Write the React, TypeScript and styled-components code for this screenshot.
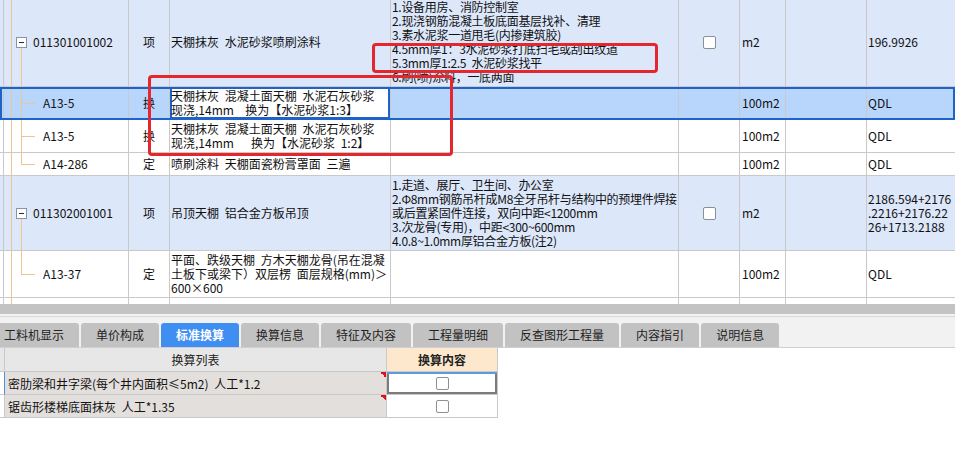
import styled, { createGlobalStyle, css } from 'styled-components';

const LINE = '#c9c9c9';
const TREE = '#efc58e';
const COLS = '4px 125px 41px 221px 288px 61px 46px 81px 1fr';

const GlobalStyle = createGlobalStyle`
  * { box-sizing: border-box; }
  html, body { margin: 0; padding: 0; background: #fff; }
  body {
    font-family: "Noto Sans CJK SC", "Liberation Sans", sans-serif;
    font-size: 12px;
    color: #111;
    overflow: hidden;
  }
`;

const Page = styled.div`
  width: 955px;
  height: 467px;
  overflow: hidden;
  background: #fff;
`;

const TopGrid = styled.div`
  position: relative;
  height: 304px;
  overflow: hidden;
`;

const Body = styled.div`
  margin-top: -2px;
  word-spacing: 3px;
`;

const Row = styled.div<{ $bg?: string; $selected?: boolean; $minH?: number }>`
  display: grid;
  grid-template-columns: ${COLS};
  min-height: ${p => p.$minH ?? 22}px;
  background: ${p => p.$bg ?? '#fff'};
  border-bottom: 1px solid ${LINE};
  line-height: 14px;
  ${p => p.$selected && css`
    outline: 2px solid #1d63c9;
    outline-offset: -2px;
    position: relative;
    z-index: 1;
  `}
`;

const Filler = styled(Row)`
  min-height: 0;
  height: 6px;
  border-bottom: none;
`;

const Cell = styled.div`
  display: flex;
  align-items: center;
  padding: 2px;
  border-right: 1px solid ${LINE};
  white-space: pre;
  overflow: hidden;
`;

const Lead = styled(Cell)`
  padding: 0;
`;

type Tree = 'parent' | 'child' | 'last' | 'none';

const bar = `linear-gradient(${TREE}, ${TREE})`;
const treeBg = (t: Tree) => {
  const layers = [`${bar} 7px 0 / 1px 100% no-repeat`];
  if (t === 'parent') layers.push(`${bar} 17px 100% / 1px 50% no-repeat`);
  if (t === 'child') layers.push(`${bar} 17px 0 / 1px 100% no-repeat`, `${bar} 17px 50% / 14px 1px no-repeat`);
  if (t === 'last') layers.push(`${bar} 17px 0 / 1px 50% no-repeat`, `${bar} 17px 50% / 14px 1px no-repeat`);
  return layers.join(', ');
};

const CodeCell = styled(Cell)<{ $tree: Tree }>`
  background: ${p => treeBg(p.$tree)};
  padding-left: ${p => (p.$tree === 'parent' ? 12 : 39)}px;
  gap: 6px;
`;

const ExpandBox = styled.span`
  width: 11px;
  height: 11px;
  flex: none;
  border: 1px solid #8596ab;
  background: #fff;
  display: inline-flex;
  align-items: center;
  justify-content: center;
  &::before {
    content: '';
    width: 5px;
    height: 1px;
    background: #2b2b2b;
  }
`;

const TypeCell = styled(Cell)`
  justify-content: center;
  padding: 0;
`;

const NameCell = styled(Cell)<{ $current?: boolean }>`
  padding-left: 1px;
  ${p => p.$current && css`
    background: #fff;
    box-shadow: inset 0 0 0 2px #1d63c9;
  `}
`;

const FeatCell = styled(Cell)`
  padding-left: 1px;
  letter-spacing: -0.3px;
`;

const CheckCell = styled(Cell)`
  justify-content: center;
`;

const Check = styled.span`
  width: 13px;
  height: 13px;
  border: 1px solid #8f8f8f;
  border-radius: 2px;
  background: #fff;
`;

const UnitCell = styled(Cell)`
  padding-left: 2px;
`;

const QtyCell = styled(Cell)`
  padding-left: 1px;
  border-right: none;
`;

const Mark = styled.div<{ $x: number; $y: number; $w: number; $h: number }>`
  position: absolute;
  left: ${p => p.$x}px;
  top: ${p => p.$y}px;
  width: ${p => p.$w}px;
  height: ${p => p.$h}px;
  border: 3px solid #e5262d;
  border-radius: 4px;
  pointer-events: none;
  z-index: 2;
`;

const Splitter = styled.div`
  height: 12px;
  background: #c3c3c3;
  border-bottom: 2px solid #f3f3f3;
`;

const TabBar = styled.div`
  display: flex;
  gap: 2px;
  margin-left: -11px;
  width: calc(100% + 11px);
  height: 32px;
  padding-top: 6px;
  background: #f2f2f2;
  border-top: 1px solid #d8d8d8;
  border-bottom: 1px solid #cfcfcf;
`;

const Tab = styled.div<{ $active?: boolean }>`
  height: 24px;
  padding: 0 15px;
  line-height: 24px;
  border-radius: 3px 3px 0 0;
  background: ${p => (p.$active ? '#3f8ff3' : '#c2c2c2')};
  color: ${p => (p.$active ? '#fff' : '#222')};
  font-weight: ${p => (p.$active ? 700 : 400)};
  white-space: nowrap;
`;

const SubGrid = styled.div`
  display: grid;
  grid-template-columns: 5px 382px 111px;
  width: 498px;
`;

const SubHead = styled.div<{ $tone: 'lead' | 'plain' | 'accent' }>`
  height: 24px;
  display: flex;
  align-items: center;
  justify-content: center;
  border-right: 1px solid ${LINE};
  border-bottom: 1px solid ${LINE};
  background: ${p => (p.$tone === 'accent' ? '#fde8cd' : '#e7e7e7')};
  font-weight: ${p => (p.$tone === 'accent' ? 700 : 400)};
  color: #222;
`;

const SubLead = styled.div<{ $active?: boolean }>`
  height: 23px;
  border-right: 1px solid ${p => (p.$active ? '#4a8fe0' : LINE)};
  border-bottom: 1px solid ${LINE};
`;

const SubLabel = styled.div`
  height: 23px;
  display: flex;
  align-items: center;
  padding-left: 3px;
  background: linear-gradient(to bottom left, #e0101c 50%, transparent 50%) top right / 6px 6px no-repeat, #e3dfdc;
  border-right: 1px solid ${LINE};
  border-bottom: 1px solid ${LINE};
  white-space: pre;
  word-spacing: 3px;
`;

const SubValue = styled.div<{ $current?: boolean }>`
  height: 23px;
  display: flex;
  align-items: center;
  justify-content: center;
  background: #fff;
  border-right: 1px solid ${LINE};
  border-bottom: 1px solid ${LINE};
  ${p => p.$current && css`
    box-shadow: inset 0 2px 0 #5b9ae0, inset 0 0 0 2px #7b7b7b;
  `}
`;

interface Item {
  code: string;
  tree: Tree;
  type: string;
  name: string;
  features?: string;
  check?: boolean;
  unit: string;
  qty: string;
  bg?: string;
  selected?: boolean;
  minH?: number;
}

const BLUE = '#dce7fa';

const items: Item[] = [
  {
    code: '011301001002', tree: 'parent', type: '项', name: '天棚抹灰 水泥砂浆喷刷涂料',
    features: '1.设备用房、消防控制室\n2.现浇钢筋混凝土板底面基层找补、清理\n3.素水泥浆一道甩毛(内掺建筑胶)\n4.5mm厚1：3水泥砂浆打底扫毛或刮出纹道\n5.3mm厚1:2.5 水泥砂浆找平\n6.刷(喷)涂料，一底两面',
    check: true, unit: 'm2', qty: '196.9926', bg: BLUE,
  },
  {
    code: 'A13-5', tree: 'child', type: '换', name: '天棚抹灰 混凝土面天棚 水泥石灰砂浆\n现浇,14mm  换为【水泥砂浆1:3】',
    unit: '100m2', qty: 'QDL', bg: '#b8d6fb', selected: true,
  },
  {
    code: 'A13-5', tree: 'child', type: '换', name: '天棚抹灰 混凝土面天棚 水泥石灰砂浆\n现浇,14mm   换为【水泥砂浆 1:2】',
    unit: '100m2', qty: 'QDL',
  },
  {
    code: 'A14-286', tree: 'last', type: '定', name: '喷刷涂料 天棚面瓷粉膏罩面 三遍',
    unit: '100m2', qty: 'QDL', minH: 23,
  },
  {
    code: '011302001001', tree: 'parent', type: '项', name: '吊顶天棚 铝合金方板吊顶',
    features: '1.走道、展厅、卫生间、办公室\n2.Φ8mm钢筋吊杆成M8全牙吊杆与结构中的预埋件焊接\n或后置紧固件连接，双向中距<1200mm\n3.次龙骨(专用)，中距<300~600mm\n4.0.8~1.0mm厚铝合金方板(注2)',
    check: true, unit: 'm2', qty: '2186.594+2176\n.2216+2176.22\n26+1713.2188', bg: BLUE,
  },
  {
    code: 'A13-37', tree: 'last', type: '定', name: '平面、跌级天棚 方木天棚龙骨(吊在混凝\n土板下或梁下）双层楞 面层规格(mm)＞\n600×600',
    unit: '100m2', qty: 'QDL',
  },
];

const tabs = ['工料机显示', '单价构成', '标准换算', '换算信息', '特征及内容', '工程量明细', '反查图形工程量', '内容指引', '说明信息'];

const conversions = [
  { label: '密肋梁和井字梁(每个井内面积≤5m2) 人工*1.2', current: true },
  { label: '锯齿形楼梯底面抹灰 人工*1.35', current: false },
];

export default function App() {
  return (
    <Page>
      <GlobalStyle />
      <TopGrid>
        <Body>
          {items.map((it, i) => (
            <Row key={i} $bg={it.bg} $selected={it.selected} $minH={it.minH}>
              <Lead />
              <CodeCell $tree={it.tree}>
                {it.tree === 'parent' && <ExpandBox />}
                {it.code}
              </CodeCell>
              <TypeCell>{it.type}</TypeCell>
              <NameCell $current={it.selected}>{it.name}</NameCell>
              <FeatCell>{it.features ?? ''}</FeatCell>
              <CheckCell>{it.check && <Check />}</CheckCell>
              <UnitCell>{it.unit}</UnitCell>
              <Cell />
              <QtyCell>{it.qty}</QtyCell>
            </Row>
          ))}
          <Filler>
            <Lead />
            <CodeCell $tree="none" />
            <Cell />
            <Cell />
            <Cell />
            <Cell />
            <Cell />
            <Cell />
            <QtyCell />
          </Filler>
        </Body>
        <Mark $x={372} $y={43} $w={286} $h={30} />
        <Mark $x={148} $y={75} $w={305} $h={81} />
      </TopGrid>
      <Splitter />
      <TabBar>
        {tabs.map(t => (
          <Tab key={t} $active={t === '标准换算'}>{t}</Tab>
        ))}
      </TabBar>
      <SubGrid>
        <SubHead $tone="lead" />
        <SubHead $tone="plain">换算列表</SubHead>
        <SubHead $tone="accent">换算内容</SubHead>
        {conversions.map(c => (
          <>
            <SubLead key={c.label + 'l'} $active={c.current} />
            <SubLabel key={c.label}>{c.label}</SubLabel>
            <SubValue key={c.label + 'v'} $current={c.current}>
              <Check />
            </SubValue>
          </>
        ))}
      </SubGrid>
    </Page>
  );
}
